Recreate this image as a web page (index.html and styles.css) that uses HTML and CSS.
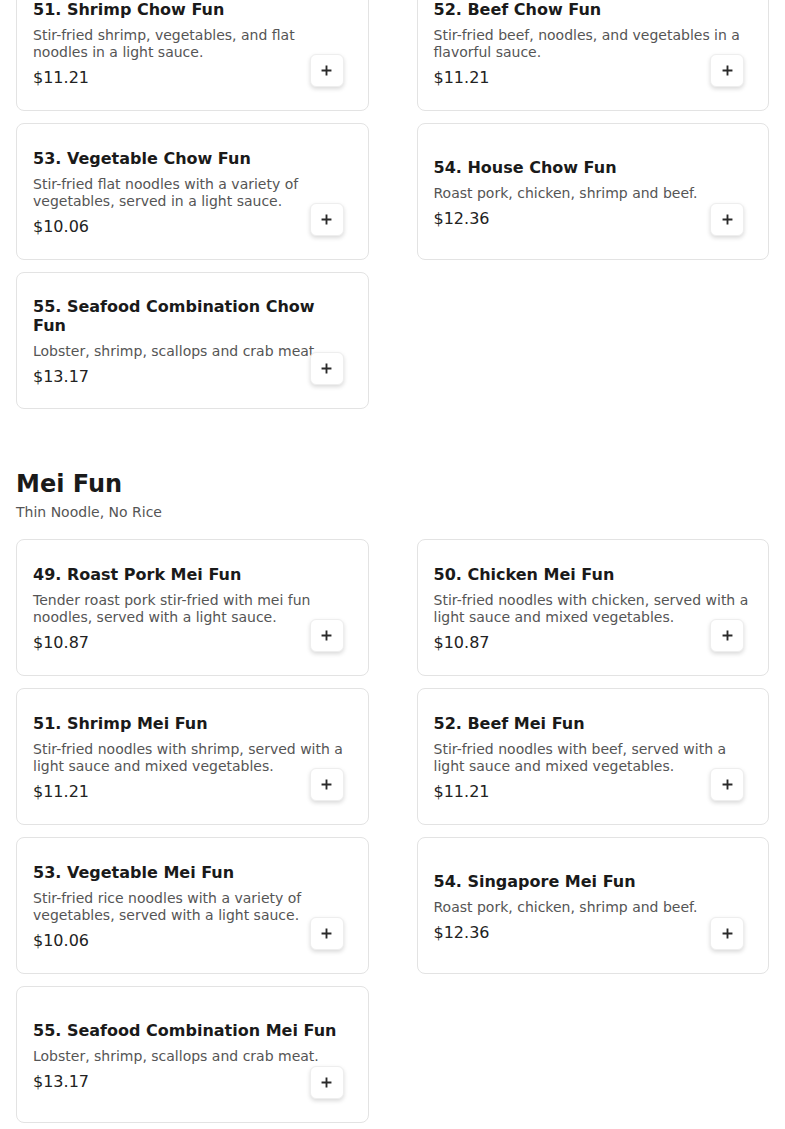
FILE: index.html
```html
<!DOCTYPE html>
<html lang="en">

<head>
    <meta charset="UTF-8">
    <meta name="viewport" content="width=device-width, initial-scale=1.0">
    <title>Menu</title>
    <link rel="stylesheet" href="styles.css">
</head>

<body>

    <div class="menu">
        <section class="category category-cut">
            <div class="items">
                <div class="item">
                    <h3>51. Shrimp Chow Fun</h3>
                    <p class="desc">Stir-fried shrimp, vegetables, and flat noodles in a light sauce.</p>
                    <p class="price">$11.21</p>
                    <button class="add" aria-label="Add"><svg viewBox="0 0 10 10"><path d="M5 0.5V9.5M0.5 5H9.5" /></svg></button>
                </div>
                <div class="item">
                    <h3>52. Beef Chow Fun</h3>
                    <p class="desc">Stir-fried beef, noodles, and vegetables in a flavorful sauce.</p>
                    <p class="price">$11.21</p>
                    <button class="add" aria-label="Add"><svg viewBox="0 0 10 10"><path d="M5 0.5V9.5M0.5 5H9.5" /></svg></button>
                </div>
                <div class="item">
                    <h3>53. Vegetable Chow Fun</h3>
                    <p class="desc">Stir-fried flat noodles with a variety of vegetables, served in a light sauce.</p>
                    <p class="price">$10.06</p>
                    <button class="add" aria-label="Add"><svg viewBox="0 0 10 10"><path d="M5 0.5V9.5M0.5 5H9.5" /></svg></button>
                </div>
                <div class="item">
                    <h3>54. House Chow Fun</h3>
                    <p class="desc">Roast pork, chicken, shrimp and beef.</p>
                    <p class="price">$12.36</p>
                    <button class="add" aria-label="Add"><svg viewBox="0 0 10 10"><path d="M5 0.5V9.5M0.5 5H9.5" /></svg></button>
                </div>
                <div class="item">
                    <h3>55. Seafood Combination Chow Fun</h3>
                    <p class="desc">Lobster, shrimp, scallops and crab meat.</p>
                    <p class="price">$13.17</p>
                    <button class="add" aria-label="Add"><svg viewBox="0 0 10 10"><path d="M5 0.5V9.5M0.5 5H9.5" /></svg></button>
                </div>
            </div>
        </section>

        <section class="category">
            <h2>Mei Fun</h2>
            <p class="subtitle">Thin Noodle, No Rice</p>
            <div class="items">
                <div class="item">
                    <h3>49. Roast Pork Mei Fun</h3>
                    <p class="desc">Tender roast pork stir-fried with mei fun noodles, served with a light sauce.</p>
                    <p class="price">$10.87</p>
                    <button class="add" aria-label="Add"><svg viewBox="0 0 10 10"><path d="M5 0.5V9.5M0.5 5H9.5" /></svg></button>
                </div>
                <div class="item">
                    <h3>50. Chicken Mei Fun</h3>
                    <p class="desc">Stir-fried noodles with chicken, served with a light sauce and mixed vegetables.</p>
                    <p class="price">$10.87</p>
                    <button class="add" aria-label="Add"><svg viewBox="0 0 10 10"><path d="M5 0.5V9.5M0.5 5H9.5" /></svg></button>
                </div>
                <div class="item">
                    <h3>51. Shrimp Mei Fun</h3>
                    <p class="desc">Stir-fried noodles with shrimp, served with a light sauce and mixed vegetables.</p>
                    <p class="price">$11.21</p>
                    <button class="add" aria-label="Add"><svg viewBox="0 0 10 10"><path d="M5 0.5V9.5M0.5 5H9.5" /></svg></button>
                </div>
                <div class="item">
                    <h3>52. Beef Mei Fun</h3>
                    <p class="desc">Stir-fried noodles with beef, served with a light sauce and mixed vegetables.</p>
                    <p class="price">$11.21</p>
                    <button class="add" aria-label="Add"><svg viewBox="0 0 10 10"><path d="M5 0.5V9.5M0.5 5H9.5" /></svg></button>
                </div>
                <div class="item">
                    <h3>53. Vegetable Mei Fun</h3>
                    <p class="desc">Stir-fried rice noodles with a variety of vegetables, served with a light sauce.</p>
                    <p class="price">$10.06</p>
                    <button class="add" aria-label="Add"><svg viewBox="0 0 10 10"><path d="M5 0.5V9.5M0.5 5H9.5" /></svg></button>
                </div>
                <div class="item">
                    <h3>54. Singapore Mei Fun</h3>
                    <p class="desc">Roast pork, chicken, shrimp and beef.</p>
                    <p class="price">$12.36</p>
                    <button class="add" aria-label="Add"><svg viewBox="0 0 10 10"><path d="M5 0.5V9.5M0.5 5H9.5" /></svg></button>
                </div>
                <div class="item">
                    <h3>55. Seafood Combination Mei Fun</h3>
                    <p class="desc">Lobster, shrimp, scallops and crab meat.</p>
                    <p class="price">$13.17</p>
                    <button class="add" aria-label="Add"><svg viewBox="0 0 10 10"><path d="M5 0.5V9.5M0.5 5H9.5" /></svg></button>
                </div>
            </div>
        </section>
    </div>

</body>

</html>
```

FILE: styles.css
```css
body {
    font-family: "DejaVu Sans", sans-serif;
    background-color: #FFFFFF;
    color: #1A1A1A;
    margin: 0;
}

.menu {
    padding: 0 16px;
}

/* page is scrolled part way into the previous category */
.category-cut {
    margin-top: -26px;
}

.category {
    margin-bottom: 60px;
}

.category h2 {
    font-size: 24px;
    font-weight: bold;
    line-height: 30px;
    margin: 0;
}

.category .subtitle {
    font-size: 14px;
    color: #555555;
    line-height: 20px;
    margin: 3px 0 17px;
}

.items {
    display: grid;
    grid-template-columns: 1fr 1fr;
    column-gap: 48px;
    row-gap: 12px;
}

.item {
    position: relative;
    min-height: 89px;
    padding: 24px 16px 22px;
    border: 1px solid #E3E3E3;
    border-radius: 8px;
    display: flex;
    flex-direction: column;
    justify-content: center;
}

.item h3 {
    font-size: 16px;
    font-weight: bold;
    line-height: 19px;
    margin: 0;
}

.item .desc {
    font-size: 14px;
    line-height: 17px;
    color: #555555;
    margin: 8px 0 0;
}

.item .price {
    font-size: 16px;
    line-height: 19px;
    color: #222222;
    margin: 7px 0 0;
}

.add {
    position: absolute;
    right: 24px;
    bottom: 23px;
    width: 34px;
    height: 33px;
    padding: 0;
    border: 1px solid #EEEEEE;
    border-radius: 6px;
    background-color: #FFFFFF;
    box-shadow: 0 2px 4px rgba(0, 0, 0, 0.15);
    cursor: pointer;
    display: flex;
    align-items: center;
    justify-content: center;
}

.add svg {
    width: 11px;
    height: 11px;
    fill: none;
    stroke: #2A2A2A;
    stroke-width: 1.7;
}
```
